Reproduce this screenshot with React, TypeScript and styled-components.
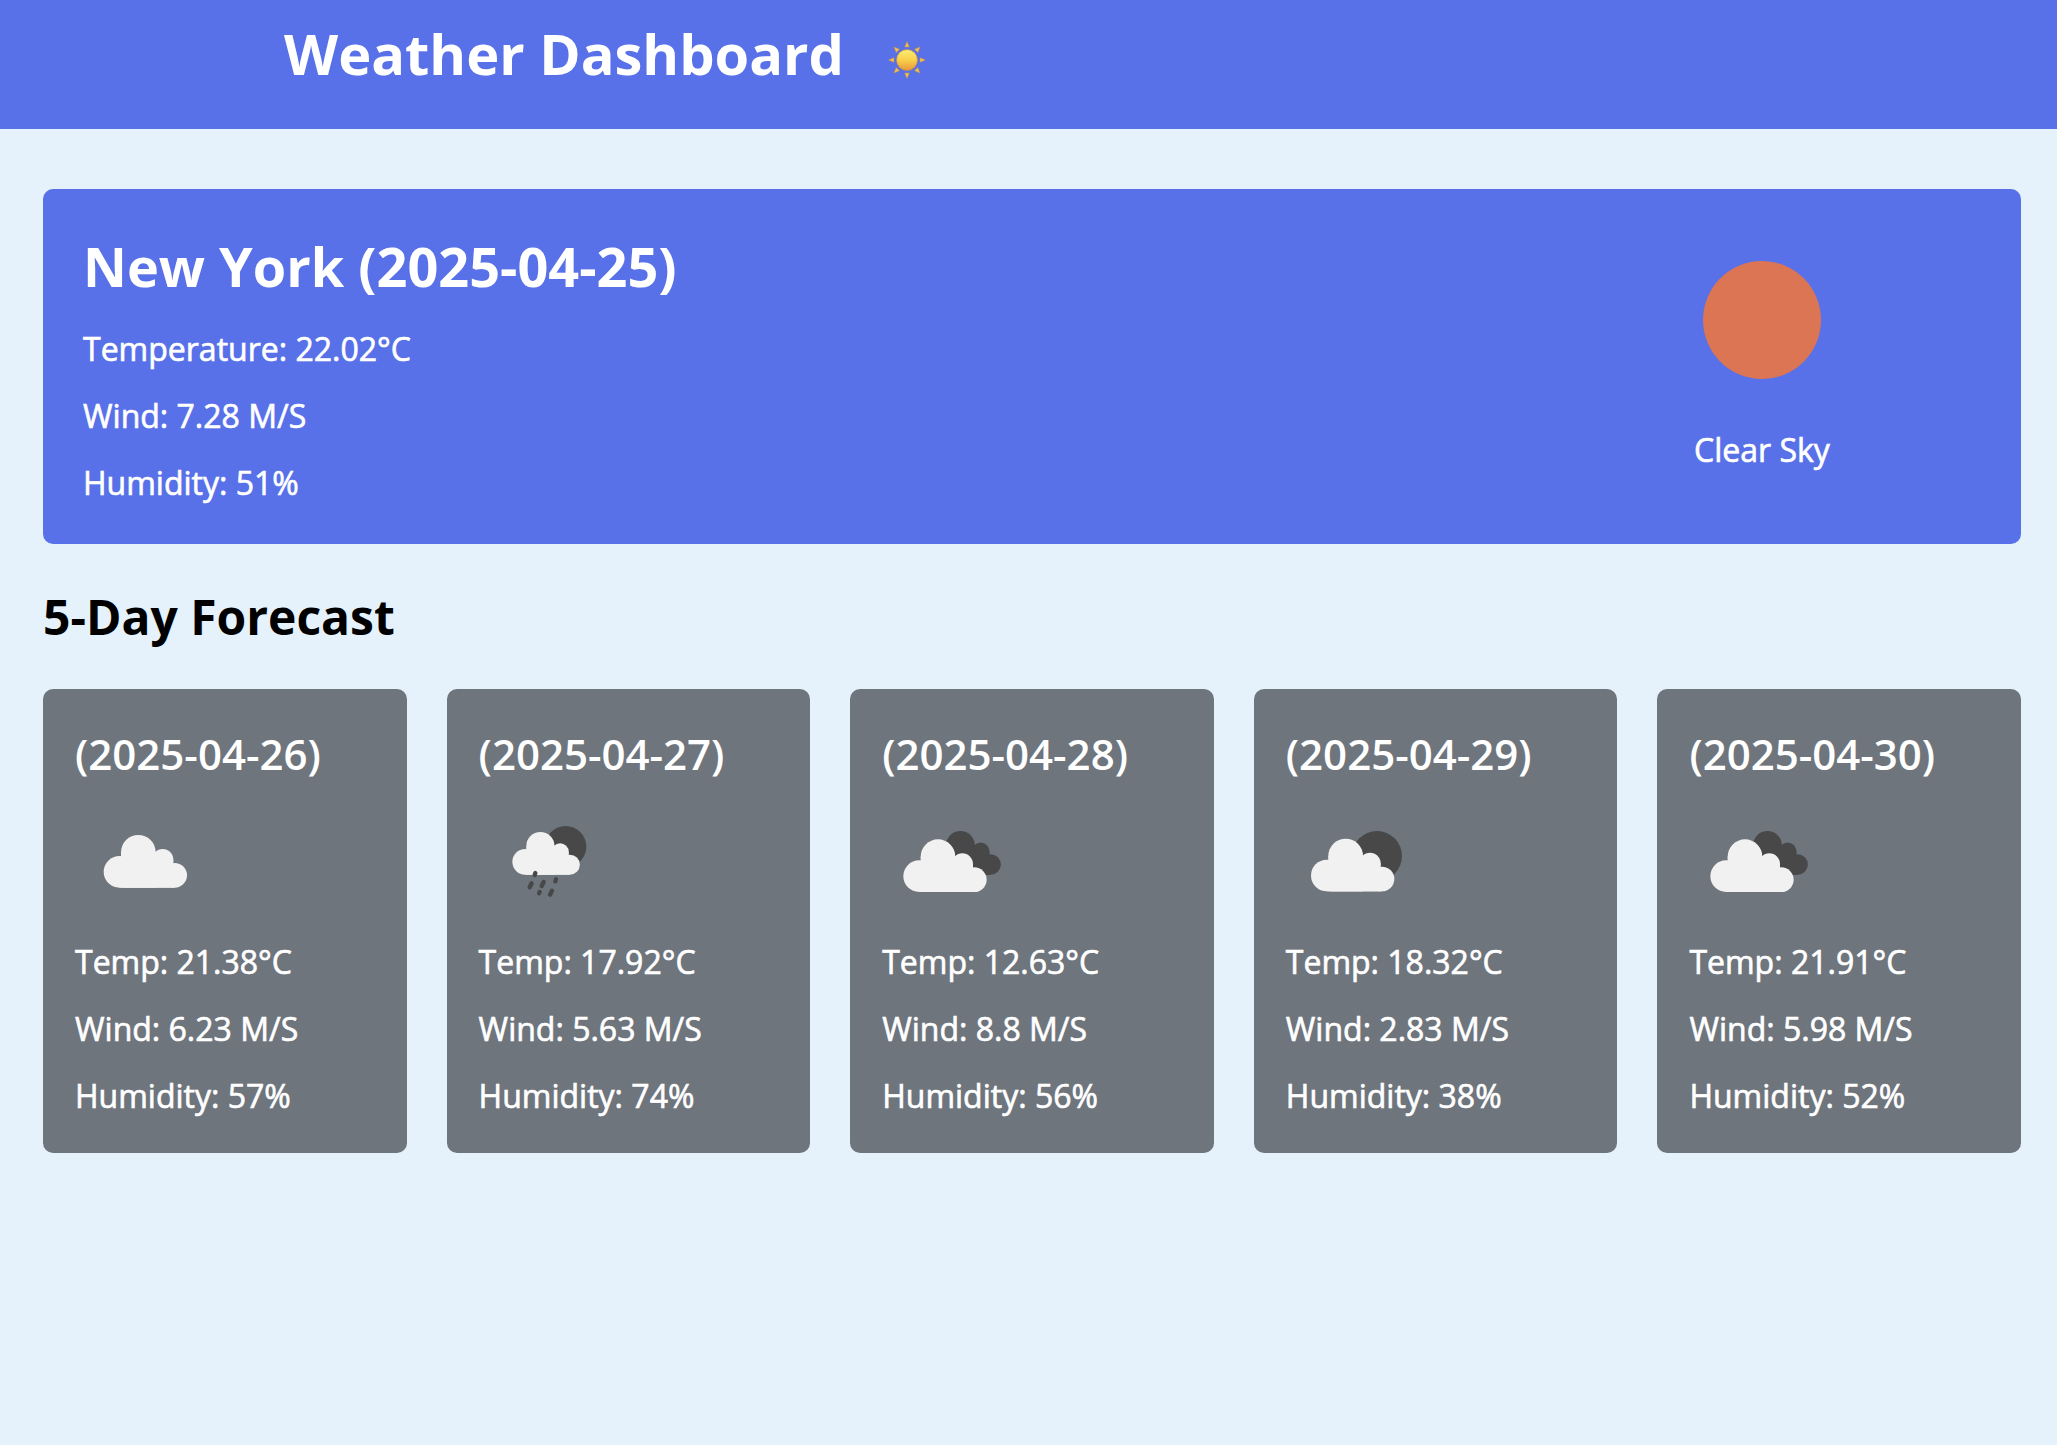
import React from "react";
import styled, { createGlobalStyle } from "styled-components";

const GlobalStyle = createGlobalStyle`
  *, *::before, *::after { box-sizing: border-box; }
  body {
    margin: 0;
    background: #e5f2fc;
    font-family: "Open Sans", "Noto Sans", sans-serif;
  }
  h1, h2, h3, p { margin: 0; }
`;

const Header = styled.header`
  display: flex;
  align-items: flex-end;
  gap: 42px;
  padding: 15px 284px 38px;
  background: #5871e8;
  color: #fff;
`;

const Title = styled.h1`
  font-size: 56px;
  line-height: 76px;
  font-weight: 700;
`;

const HeaderSun = styled.svg`
  width: 42px;
  height: 42px;
  margin-bottom: 10px;
`;

const Main = styled.main`
  display: flex;
  flex-direction: column;
  gap: 40px;
  padding: 60px 36px 40px 43px;
`;

const CurrentCard = styled.section`
  display: flex;
  justify-content: space-between;
  align-items: flex-start;
  padding: 40px;
  border-radius: 10px;
  background: #5871e8;
  color: #fff;
`;

const Details = styled.div`
  display: flex;
  flex-direction: column;
  gap: 24px;
`;

const City = styled.h2`
  font-size: 54px;
  line-height: 74px;
  font-weight: 700;
`;

const Reading = styled.p`
  font-size: 32px;
  line-height: 43px;
  font-weight: 500;
  -webkit-text-stroke: 0.02em currentColor;
`;

const Conditions = styled.div`
  display: flex;
  flex-direction: column;
  align-items: center;
  gap: 17px;
  margin-right: 128px;
`;

const ConditionsIcon = styled.svg`
  width: 182px;
  height: 182px;
`;

const SectionTitle = styled.h2`
  font-size: 48px;
  line-height: 65px;
  font-weight: 700;
  color: #000;
`;

const ForecastSection = styled.section`
  display: flex;
  flex-direction: column;
  gap: 40px;
`;

const CardList = styled.ul`
  display: grid;
  grid-template-columns: repeat(5, 1fr);
  gap: 40px;
  margin: 0;
  padding: 0;
  list-style: none;
`;

const Card = styled.li`
  padding: 36px 32px;
  border-radius: 10px;
  background: #6e757d;
  color: #fff;
`;

const CardDate = styled.h3`
  font-size: 42px;
  line-height: 57px;
  font-weight: 600;
`;

const CardIcon = styled.svg`
  display: block;
  width: 140px;
  height: 140px;
  margin: 9px 0;
`;

const LIGHT = "#f1f1f1";
const DARK = "#484849";

type Sky = "cloud" | "rain" | "broken" | "scattered";

function Cloud({ x, y, scale = 1, fill }: { x: number; y: number; scale?: number; fill: string }) {
  return (
    <g transform={`translate(${x} ${y}) scale(${scale})`} fill={fill}>
      <circle cx="47.5" cy="110.5" r="47.5" />
      <circle cx="104" cy="52" r="52" />
      <circle cx="177" cy="74" r="32" />
      <circle cx="213" cy="121" r="37" />
      <rect x="52" y="52" width="104" height="106" />
      <rect x="60" y="74" width="149" height="84" />
      <rect x="47.5" y="110" width="165.5" height="48" />
    </g>
  );
}

function SkyIcon({ sky, label }: { sky: Sky; label: string }) {
  return (
    <CardIcon viewBox="0 0 420 420" role="img" aria-label={label}>
      {sky === "cloud" && <Cloud x={86} y={132} fill={LIGHT} />}
      {sky === "rain" && (
        <>
          <circle cx="260" cy="167" r="62" fill={DARK} />
          <Cloud x={100} y={123} scale={0.81} fill={LIGHT} />
          <path
            d="M169 246l-2 6M231 265l-2 6M182 303l-2 4M158 277l-6 12M194 273l-6 12M219 299l-6 12"
            stroke={DARK}
            strokeWidth="13"
            strokeLinecap="round"
          />
        </>
      )}
      {sky === "broken" && (
        <>
          <Cloud x={149} y={120} scale={0.83} fill={DARK} />
          <Cloud x={64} y={145} fill={LIGHT} />
        </>
      )}
      {sky === "scattered" && (
        <>
          <circle cx="273" cy="195" r="75" fill={DARK} />
          <Cloud x={75} y={143} fill={LIGHT} />
        </>
      )}
    </CardIcon>
  );
}

const forecast: { date: string; sky: Sky; label: string; temp: string; wind: string; humidity: string }[] = [
  { date: "2025-04-26", sky: "cloud", label: "Cloudy", temp: "21.38", wind: "6.23", humidity: "57" },
  { date: "2025-04-27", sky: "rain", label: "Rain", temp: "17.92", wind: "5.63", humidity: "74" },
  { date: "2025-04-28", sky: "broken", label: "Broken clouds", temp: "12.63", wind: "8.8", humidity: "56" },
  { date: "2025-04-29", sky: "scattered", label: "Few clouds", temp: "18.32", wind: "2.83", humidity: "38" },
  { date: "2025-04-30", sky: "broken", label: "Broken clouds", temp: "21.91", wind: "5.98", humidity: "52" },
];

export default function App() {
  return (
    <>
      <GlobalStyle />
      <Header>
        <Title>Weather Dashboard</Title>
        <HeaderSun viewBox="0 0 40 40" role="img" aria-label="Sun">
          <defs>
            <linearGradient id="sunFace" x1="0" y1="0" x2="0" y2="1">
              <stop offset="0" stopColor="#fbee74" />
              <stop offset="0.5" stopColor="#f8d04a" />
              <stop offset="1" stopColor="#e9983a" />
            </linearGradient>
          </defs>
          {[0, 45, 90, 135, 180, 225, 270, 315].map((angle) => (
            <path
              key={angle}
              d="M20 2.5L22.2 7.6H17.8Z"
              fill="#f3c250"
              stroke="#c98d4a"
              strokeWidth="0.5"
              transform={`rotate(${angle} 20 20)`}
            />
          ))}
          <circle cx="20" cy="20" r="10" fill="url(#sunFace)" stroke="#c68b55" strokeWidth="0.7" />
        </HeaderSun>
      </Header>
      <Main>
        <CurrentCard>
          <Details>
            <City>New York (2025-04-25)</City>
            <Reading>Temperature: 22.02°C</Reading>
            <Reading>Wind: 7.28 M/S</Reading>
            <Reading>Humidity: 51%</Reading>
          </Details>
          <Conditions>
            <ConditionsIcon viewBox="0 0 182 182" aria-hidden="true">
              <circle cx="91" cy="91" r="59" fill="#db7553" />
            </ConditionsIcon>
            <Reading>Clear Sky</Reading>
          </Conditions>
        </CurrentCard>
        <ForecastSection>
          <SectionTitle>5-Day Forecast</SectionTitle>
          <CardList>
            {forecast.map((day) => (
              <Card key={day.date}>
                <CardDate>({day.date})</CardDate>
                <SkyIcon sky={day.sky} label={day.label} />
                <Details>
                  <Reading>Temp: {day.temp}°C</Reading>
                  <Reading>Wind: {day.wind} M/S</Reading>
                  <Reading>Humidity: {day.humidity}%</Reading>
                </Details>
              </Card>
            ))}
          </CardList>
        </ForecastSection>
      </Main>
    </>
  );
}
